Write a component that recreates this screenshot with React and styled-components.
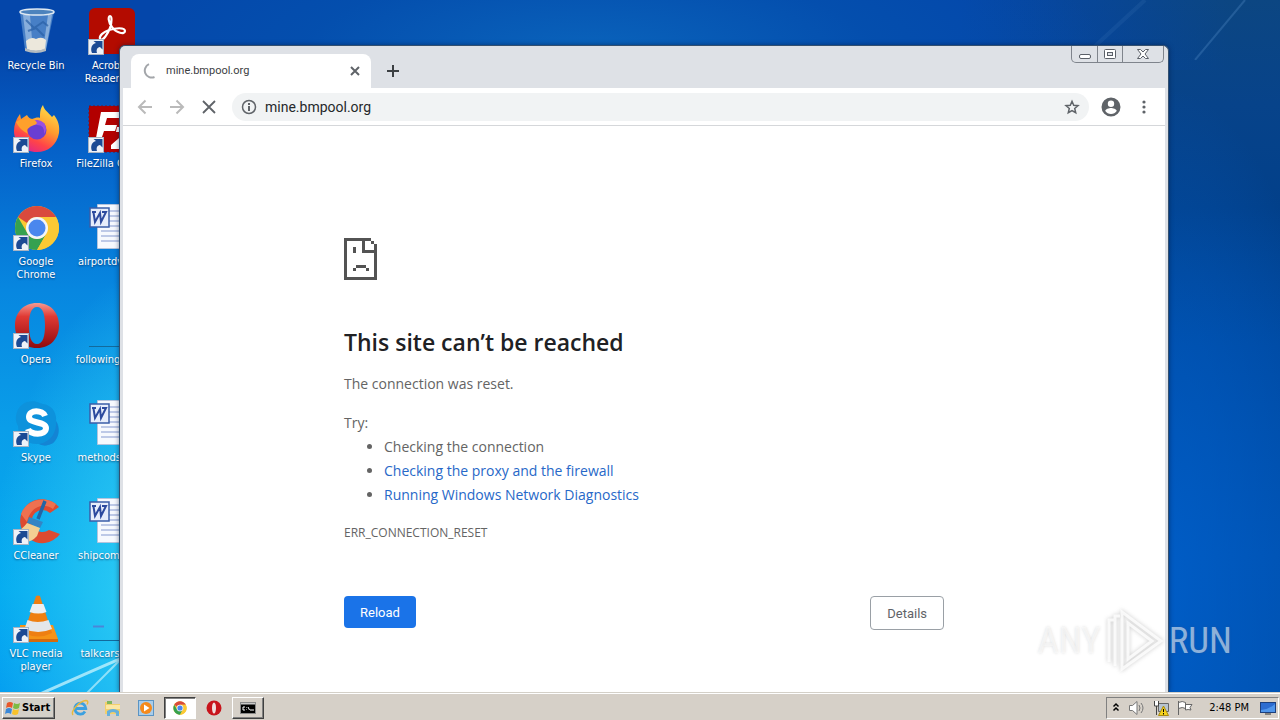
import React from 'react'
import styled, { createGlobalStyle } from 'styled-components'

const GlobalStyle = createGlobalStyle`
*{
  box-sizing: border-box;
}
body{
  margin: 0;
  overflow: hidden;
  font-family: "DejaVu Sans Condensed", "DejaVu Sans", sans-serif;
}
button{
  font-family: inherit;
  padding: 0;
  cursor: pointer;
}
svg{
  display: block;
}
`

const Screen = styled.div`
display: flex;
flex-direction: column;
height: 100vh;
`

const Desktop = styled.main`
flex: 1;
min-height: 0;
position: relative;
overflow: hidden;
background:
  radial-gradient(ellipse 200px 340px at 190px 86%, #5ae8f8 0, rgba(50,208,245,0.7) 40%, rgba(10,170,240,0) 100%) no-repeat 0 0 / 400px 100%,
  linear-gradient(to bottom, #0446aa 0, #0446aa 7%, #0560c8 21%, #0787e0 42%, #0a9ee9 62%, #04abf0 85%, #059ff0 100%) no-repeat 0 0 / 160px 100%,
  radial-gradient(ellipse 180px 500px at 91% 85%, rgba(0,96,204,0.8), rgba(0,80,176,0)) no-repeat 0 0 / 100% 100%,
  radial-gradient(ellipse 520px 160px at 46% 8%, #0a64bc 0, rgba(4,84,176,0.6) 55%, rgba(4,70,170,0) 100%) no-repeat 0 0 / 100% 100%,
  linear-gradient(to right, #0446aa 75%, rgba(4,70,170,0) 96%) no-repeat 0 0 / 100% 70px,
  linear-gradient(to bottom, #0c4682 0, #07438a 15%, #02408a 30%, #0049a0 50%, #0050ae 80%, #004fac 100%);
`

const Beams = styled.svg`
position: absolute;
left: ${props => props.$right ? 'auto' : '0'};
right: ${props => props.$right ? '0' : 'auto'};
bottom: ${props => props.$right ? 'auto' : '0'};
top: ${props => props.$right ? '0' : 'auto'};
`

const IconGrid = styled.ul`
position: relative;
list-style: none;
margin: 0;
padding: 0;
display: grid;
grid-template-rows: repeat(7, 98px);
grid-auto-flow: column;
grid-auto-columns: 72px;
column-gap: 3px;
`

const Shortcut = styled.li`
display: flex;
flex-direction: column;
align-items: center;
gap: 4px;
padding-top: 7px;
color: #fff;
font-size: 11px;
line-height: 13px;
text-align: center;
text-shadow: 0 1px 2px rgba(0,20,60,0.6);
white-space: pre;
`

const Window = styled.section`
position: absolute;
top: 45px;
left: 119px;
right: 111px;
bottom: 0;
display: flex;
flex-direction: column;
padding: 0 3px;
background: #dee1e6;
border: 1px solid #34506f;
border-bottom: none;
border-radius: 6px 6px 0 0;
box-shadow: 0 0 5px rgba(0,15,50,0.5);
`

const TabStrip = styled.header`
display: flex;
align-items: flex-end;
height: 42px;
padding-left: 8px;
`

const Tab = styled.div`
display: flex;
align-items: center;
gap: 8px;
width: 240px;
height: 34px;
padding: 0 8px 0 11px;
background: #fff;
border-radius: 8px 8px 0 0;
`

const TabTitle = styled.span`
flex: 1;
color: #3c4043;
font: 11px/16px Roboto, "Open Sans", sans-serif;
`

const IconButton = styled.button`
display: flex;
align-items: center;
justify-content: center;
width: ${props => props.$size || 16}px;
height: ${props => props.$size || 16}px;
border: none;
border-radius: 50%;
background: none;
color: ${props => props.$dim ? '#bababa' : '#5f6368'};
`

const NewTab = styled(IconButton)`
margin: 0 auto 3px 8px;
color: #3c4043;
`

const Controls = styled.div`
display: flex;
align-self: flex-start;
height: 17px;
margin-right: 1px;
border: 1px solid #7f848c;
border-top: none;
border-radius: 0 0 5px 5px;
`

const Control = styled.button`
display: flex;
align-items: center;
justify-content: center;
width: ${props => props.$wide ? '41px' : '25px'};
border: none;
border-left: ${props => props.$first ? 'none' : '1px solid #7f848c'};
background: none;
`

const Toolbar = styled.nav`
display: flex;
align-items: center;
gap: 8px;
height: 38px;
padding: 0 10px;
background: #fff;
border-bottom: 1px solid #d5d7da;
`

const Omnibox = styled.div`
flex: 1;
display: flex;
align-items: center;
gap: 8px;
height: 28px;
margin-left: 3px;
padding: 0 9px;
border-radius: 14px;
background: #f1f3f4;
color: #5f6368;
`

const Address = styled.input`
flex: 1;
min-width: 0;
padding: 0;
border: none;
outline: none;
background: none;
color: #26282b;
font: 14px/20px Roboto, "Open Sans", sans-serif;
`

const Page = styled.div`
flex: 1;
min-height: 0;
padding: 112px 24px 0;
overflow: hidden;
background: #fff;
color: #646464;
font: 14px/24px "Open Sans", "Noto Sans", sans-serif;
`

const ErrorBox = styled.div`
max-width: 600px;
margin: 0 auto;
`

const Heading = styled.h1`
margin: 48px 0 16px;
color: #202124;
font-size: 23px;
font-weight: 600;
line-height: 28px;
`

const Text = styled.p`
margin: 0 0 15px;
`

const Tips = styled.ul`
margin: -15px 0 0;
padding-left: 40px;
`

const Link = styled.a`
color: #2768c8;
text-decoration: none;
`

const ErrorCode = styled.div`
margin-top: 14px;
font-size: 12px;
`

const Actions = styled.div`
display: flex;
justify-content: space-between;
align-items: flex-start;
margin-top: 51px;
`

const Action = styled.button`
height: ${props => props.$primary ? '32px' : '34px'};
padding: 0 16px;
border: ${props => props.$primary ? 'none' : '1px solid #9aa0a6'};
border-radius: 4px;
background: ${props => props.$primary ? '#1a73e8' : '#fff'};
color: ${props => props.$primary ? '#fff' : '#5f6368'};
font-family: Roboto, "Open Sans", sans-serif;
font-size: 13px;
`

const Watermark = styled.div`
position: absolute;
right: 48px;
bottom: 18px;
display: flex;
align-items: center;
gap: 5px;
color: rgba(255,255,255,0.55);
font: 37px/66px "Liberation Sans Narrow", "Roboto Condensed", "Open Sans Condensed", "DejaVu Sans Condensed", sans-serif;
text-shadow: 0 0 3px rgba(90,90,90,0.2);
`

const WatermarkLogo = styled.svg`
filter: drop-shadow(0 0 2px rgba(90,90,90,0.4));
`

const Taskbar = styled.footer`
display: flex;
align-items: center;
height: 28px;
padding: 2px 1px 0 2px;
background: #d6d0c8;
border-top: 1px solid #d4d0c8;
box-shadow: inset 0 1px 0 #fff;
position: relative;
`

const StartButton = styled.button`
display: flex;
align-items: center;
gap: 1px;
height: 22px;
padding: 0 4px 0 2px;
border: 1px solid;
border-color: #fff #404040 #404040 #fff;
box-shadow: inset -1px -1px 0 #808080;
background: #d4d0c8;
color: #000;
font-size: 11px;
font-weight: bold;
`

const TaskButton = styled.button`
display: flex;
align-items: center;
justify-content: center;
width: ${props => props.$state ? '32px' : '24px'};
height: 22px;
border: 1px solid transparent;
border-color: ${props => props.$state === 'active' ? '#404040 #fff #fff #404040' : props.$state === 'open' ? '#fff #404040 #404040 #fff' : 'transparent'};
box-shadow: ${props => props.$state === 'active' ? 'inset 1px 1px 0 #808080' : props.$state === 'open' ? 'inset -1px -1px 0 #808080' : 'none'};
background: ${props => props.$state === 'active' ? '#fff' : 'transparent'};
`

const QuickLaunch = styled.div`
display: flex;
align-items: center;
gap: 9px;
margin-left: 13px;
`

const RunningApps = styled.div`
display: flex;
align-items: center;
gap: 6px;
margin-left: 6px;
`

const Tray = styled.div`
display: flex;
align-items: center;
gap: 8px;
height: 22px;
margin-left: auto;
padding: 0 2px 0 5px;
border: 1px solid;
border-color: #808080 #fff #fff #808080;
font-size: 11px;
color: #000;
`

const Clock = styled.time`
margin: 0 3px 0 8px;
`

const Arrow = () => (
    <g>
        <rect x='1.5' y='32.5' width='15' height='15' fill='#eef2f8' stroke='#a8b4c4' />
        <path d='M5 46c-2-5 0-9 4-10L6.500 34h9v8.500l-2.500-2.500c-3 .5-4 3-3 6z' fill='#1c4a94' />
    </g>
)

const Glyph = ({ children, shortcut = true }) => (
    <svg width='48' height='48' viewBox='0 0 48 48' aria-hidden='true'>
        {children}
        {shortcut && <Arrow />}
    </svg>
)

const RecycleBin = () => (
    <Glyph shortcut={false}>
        <path d='M8 5L13 43Q24 48 34 43L42 5Z' fill='#5e93cf' fillOpacity='.75' />
        <path d='M11 8l4 34 6 2-3-36zM36 8l-5 35 3-1 6-34z' fill='#c8def2' fillOpacity='.5' />
        <path d='M14 34q5-5 10-2 6-3 10 1l-1 9q-9 4-18 0z' fill='#ece8dc' />
        <path d='M14 13l8 8 9-6 5 4M16 24l8-3 8 8' stroke='#2a5fa5' strokeWidth='2' fill='none' opacity='.7' />
        <ellipse cx='25' cy='5' rx='17' ry='3' fill='#4d83bd' stroke='#dfe9f2' strokeWidth='1.500' />
        <path d='M13 41q11 5 21 0v3q-10 4-21 0z' fill='#b4bbc0' />
    </Glyph>
)

const Firefox = () => (
    <Glyph>
        <defs>
            <linearGradient id='fx' x1='.8' y1='0' x2='.3' y2='1'>
                <stop offset='0' stopColor='#ffe34a' />
                <stop offset='.45' stopColor='#ff9a2e' />
                <stop offset='.75' stopColor='#ff4448' />
                <stop offset='1' stopColor='#e0268a' />
            </linearGradient>
        </defs>
        <path d='M31 0c1 5 5 7 9 12l2-2c4 5 6 11 5 18-2 12-11 19-22 19C11 47 2 38 2 26c0-6 2-12 6-17l1 5 6-4c1 2 3 4 5 4 3-1 6-2 8-1 0-5 0-9 3-13z' fill='url(#fx)' />
        <circle cx='25' cy='25' r='9.500' fill='#6a3ed2' />
        <path d='M18 18q7-6 14 0 4 6 0 11 1-9-7-9z' fill='#9a4fe0' />
        <path d='M4 17c5-4 10-2 12-3 5-1 8 2 9 4-2 3-6 2-8 5-3 1-2 4-1 6-5-3-9-6-12-12z' fill='#ffa02c' />
    </Glyph>
)

const ChromeBall = () => (
    <>
        <circle cx='25' cy='25' r='22' fill='#fbc934' />
        <path d='M6 14A22 22 0 0 1 44 14H25A11 11 0 0 0 15 20z' fill='#d94a3d' />
        <path d='M6 14A22 22 0 0 0 25 47L34.500 30.500A11 11 0 0 1 15.500 30.500z' fill='#35a150' />
        <path d='M44 14A22 22 0 0 1 25 47L34.500 30.500A11 11 0 0 0 34 18L25 14z' fill='#fbc934' />
        <circle cx='25' cy='25' r='11' fill='#f3f5f8' />
        <circle cx='25' cy='25' r='8.500' fill='#4a87ee' />
    </>
)

const OperaRing = () => (
    <>
        <defs>
            <linearGradient id='op' x1='0' y1='0' x2='0' y2='1'>
                <stop offset='0' stopColor='#f39a92' />
                <stop offset='.3' stopColor='#e03a34' />
                <stop offset='1' stopColor='#8f0a0e' />
            </linearGradient>
        </defs>
        <path fillRule='evenodd' d='M25 2C39 2 47 12 47 24.500S39 47 25 47 3 37 3 24.500 11 2 25 2zM25 6c-6 0-8 8-8 18.500S19 43 25 43s8-8 8-18.500S31 6 25 6z' fill='url(#op)' />
    </>
)

const Skype = () => (
    <Glyph>
        <path d='M15 3C24 1 26 4 31 5c9 1 14 9 13 17 5 7 3 17-3 22-5 3-10 3-14 1C15 46 6 38 6 27 1 19 5 6 15 3z' fill='#0d92dc' />
        <path d='M44 22c4 8 3 16-3 22-5 3-10 3-14 1 12-2 18-12 17-23z' fill='#1484d4' />
        <path d='M33 17c-2-6-16-7-16 1 0 7 17 4 17 11 0 8-16 7-18 1' stroke='#fff' strokeWidth='6' fill='none' />
    </Glyph>
)

const CCleaner = () => (
    <Glyph>
        <path d='M47 10A22 22 0 1 0 48 37L37 33A11 11 0 1 1 38 16z' fill='#de4a30' />
        <path d='M44 7C32-2 14 3 9 17l6 8C18 11 30 4 41 12z' fill='#ee7150' />
        <path d='M33 4l-7 18' stroke='#2365a5' strokeWidth='3.500' />
        <path d='M17 20l14 5-3 6-13-5z' fill='#3584c4' />
        <path d='M15 26l13 5-3 8q-6 7-14 6-5-1-8-10 7-2 12-9z' fill='#f4cf92' />
    </Glyph>
)

const Vlc = () => (
    <Glyph>
        <path d='M8 30h33l5 14q0 3-3 3H8z' fill='#f59316' />
        <path d='M8 44h38v3H8z' fill='#d46b0c' />
        <path d='M24 1q2-1 4 0l12 37q-14 7-28 0z' fill='#ee7f12' />
        <path d='M20.500 9h11l3 8q-8 3-17 0z' fill='#eceff2' />
        <path d='M15.500 25q10 4 21 0l3.500 9q-14 6-27.500 0z' fill='#e4e7ea' />
    </Glyph>
)

const Acrobat = () => (
    <Glyph>
        <rect x='2' y='1' width='46' height='46' rx='6' fill='#b30b00' />
        <path d='M13 32c3 3 8-6 10-11 2-6 2-12 0-12s-2 6 2 11c4 6 13 8 13 4s-10-3-16-1-10 6-9 9z' fill='none' stroke='#fff' strokeWidth='2.200' />
    </Glyph>
)

const FileZilla = () => (
    <Glyph>
        <rect x='2' y='1' width='46' height='46' fill='#b20000' stroke='#7c1020' strokeDasharray='2 2' />
        <path d='M14 7h21l-1 6H20l-2 7h12l-2 6H17l-4 12H8zM30 22h18v5L33 39h13v5H24v-4l15-13H29z' fill='#fff' />
    </Glyph>
)

const WordDoc = () => (
    <Glyph shortcut={false}>
        <path d='M10.500 1.500h34v44h-34z' fill='#f6f9fe' stroke='#b3c4dd' />
        <path d='M22 8h20M22 13h20M22 18h20M22 23h20M14 28h28M14 33h28M14 38h28' stroke='#8499d0' strokeWidth='1.200' />
        <rect x='3' y='5' width='19' height='19' fill='#e6edfb' stroke='#3a5da8' strokeWidth='1.500' />
        <path d='M5 9h4M6.500 9.500L8 19l5-9 1 9 5-10h-4' stroke='#2c4a9e' strokeWidth='2' fill='none' />
    </Glyph>
)

const Thumb = ({ mark }) => (
    <Glyph shortcut={false}>
        <path d='M2 45.500h44' stroke='#126a9c' />
        {mark && <path d='M6 31.500h11' stroke='#4a86d8' strokeWidth='2' />}
    </Glyph>
)

const shortcuts = [
    ['Recycle Bin', <RecycleBin />],
    ['Firefox', <Firefox />],
    ['Google\nChrome', <Glyph><ChromeBall /></Glyph>],
    ['Opera', <Glyph><OperaRing /></Glyph>],
    ['Skype', <Skype />],
    ['CCleaner', <CCleaner />],
    ['VLC media\nplayer', <Vlc />],
    ['Acrobat\nReader DC', <Acrobat />],
    ['FileZilla Client', <FileZilla />],
    ['airportdvd.rtf', <WordDoc />],
    ['followingt.png', <Thumb />],
    ['methodsst.rtf', <WordDoc />],
    ['shipcomm.rtf', <WordDoc />],
    ['talkcars.png', <Thumb mark />],
]

const Line = ({ d, size = 16, width = 2 }) => (
    <svg width={size} height={size} viewBox='0 0 16 16' fill='none' stroke='currentColor' strokeWidth={width} aria-hidden='true'>
        <path d={d} />
    </svg>
)

const Browser = () => (
    <Window aria-label='Browser window'>
        <TabStrip>
            <Tab>
                <svg width='16' height='16' viewBox='0 0 16 16' aria-hidden='true'>
                    <path d='M7 1.200A6.800 6.800 0 1 0 12.500 14' fill='none' stroke='#a3a6aa' strokeWidth='2' />
                </svg>
                <TabTitle>mine.bmpool.org</TabTitle>
                <IconButton aria-label='Close tab'><Line d='M4 4l8 8M12 4l-8 8' /></IconButton>
            </Tab>
            <NewTab $size={28} aria-label='New tab'><Line d='M8 2v12M2 8h12' /></NewTab>
            <Controls>
                <Control $first aria-label='Minimize'>
                    <svg width='14' height='14' viewBox='0 0 14 14'><rect x='1.500' y='7.500' width='11' height='4' rx='1.500' fill='#fff' stroke='#5b6068' /></svg>
                </Control>
                <Control aria-label='Maximize'>
                    <svg width='14' height='14' viewBox='0 0 14 14'><rect x='1.500' y='2.500' width='11' height='9' rx='1' fill='#fff' stroke='#5b6068' /><rect x='4.500' y='5.500' width='5' height='3' fill='#dee1e6' stroke='#5b6068' /></svg>
                </Control>
                <Control $wide aria-label='Close'>
                    <svg width='14' height='14' viewBox='0 0 14 14'><path d='M1.500 2.500h3L7 5l2.500-2.500h3L9 7l3.500 4.500h-3L7 9l-2.500 2.500h-3L5 7z' fill='#fff' stroke='#5b6068' /></svg>
                </Control>
            </Controls>
        </TabStrip>
        <Toolbar>
            <IconButton $size={24} $dim aria-label='Back'><Line d='M15 8H2M8.500 1.500L2 8l6.500 6.500' /></IconButton>
            <IconButton $size={24} $dim aria-label='Forward'><Line d='M1 8h13M7.500 1.500L14 8l-6.500 6.500' /></IconButton>
            <IconButton $size={24} aria-label='Stop'><Line d='M2 2l12 12M14 2L2 14' width={1.8} /></IconButton>
            <Omnibox>
                <svg width='16' height='16' viewBox='0 0 16 16' aria-hidden='true'>
                    <circle cx='8' cy='8' r='6.500' fill='none' stroke='currentColor' strokeWidth='1.500' />
                    <path d='M8 7v5M8 4v2' stroke='currentColor' strokeWidth='2' />
                </svg>
                <Address aria-label='Address' defaultValue='mine.bmpool.org' />
                <IconButton aria-label='Bookmark'>
                    <Line width={1.5} d='M8 2.300l1.700 4 4.300.4-3.300 2.800 1 4.200L8 11.500l-3.700 2.200 1-4.200L2 6.700l4.300-.4z' />
                </IconButton>
            </Omnibox>
            <IconButton $size={28} aria-label='Profile'>
                <svg width='20' height='20' viewBox='0 0 20 20'>
                    <path fillRule='evenodd' fill='currentColor' d='M10 .5a9.500 9.500 0 1 0 0 19 9.500 9.500 0 0 0 0-19zM10 3.500a3.200 3.200 0 1 1 0 6.400 3.200 3.200 0 0 1 0-6.400zM10 17a6.800 6.800 0 0 1-5.700-3c0-1.900 3.800-3 5.700-3s5.700 1.100 5.700 3A6.800 6.800 0 0 1 10 17z' />
                </svg>
            </IconButton>
            <IconButton $size={22} aria-label='Menu'>
                <svg width='16' height='16' viewBox='0 0 16 16' fill='currentColor'><circle cx='8' cy='3' r='1.600' /><circle cx='8' cy='8' r='1.600' /><circle cx='8' cy='13' r='1.600' /></svg>
            </IconButton>
        </Toolbar>
        <Page>
            <ErrorBox>
                <svg width='33' height='42' viewBox='0 0 33 42' fill='#535353' shapeRendering='crispEdges' aria-hidden='true'>
                    <path d='M0 0h27v3H3v36h27V6h3v36H0zM18 3h3v9h9v3H18zM27 3h3v3h-3zM9 9h3v6H9zM12 27h10v3H12zM9 30h3v3H9zM22 30h3v3h-3z' />
                </svg>
                <Heading>This site can’t be reached</Heading>
                <Text>The connection was reset.</Text>
                <Text>Try:</Text>
                <Tips>
                    <li>Checking the connection</li>
                    <li><Link href='#proxy'>Checking the proxy and the firewall</Link></li>
                    <li><Link href='#diagnostics'>Running Windows Network Diagnostics</Link></li>
                </Tips>
                <ErrorCode>ERR_CONNECTION_RESET</ErrorCode>
                <Actions>
                    <Action $primary>Reload</Action>
                    <Action>Details</Action>
                </Actions>
            </ErrorBox>
        </Page>
    </Window>
)

const App = () => {
    return (
        <Screen>
            <GlobalStyle />
            <Desktop>
                <Beams width='120' height='80' viewBox='0 0 120 80' aria-hidden='true'>
                    <path d='M40 82Q85 62 122 46' stroke='#c9f4fd' strokeWidth='3' fill='none' opacity='.75' />
                    <path d='M86 82Q104 64 122 46' stroke='#bdf0fb' strokeWidth='2' fill='none' opacity='.7' />
                </Beams>
                <Beams $right width='200' height='60' viewBox='0 0 200 60' aria-hidden='true'>
                    <path d='M165 0L115 60' stroke='#5b93cc' strokeWidth='2' opacity='.3' />
                    <path d='M65 0L0 60' stroke='#5b93cc' strokeWidth='4' opacity='.12' />
                </Beams>
                <IconGrid>
                    {shortcuts.map(([name, icon]) => (
                        <Shortcut key={name}>
                            {icon}
                            <span>{name}</span>
                        </Shortcut>
                    ))}
                </IconGrid>
                <Browser />
                <Watermark>
                    <span>ANY</span>
                    <WatermarkLogo width='58' height='66' viewBox='0 0 58 66' fill='none' stroke='rgba(255,255,255,.8)' strokeWidth='3' aria-hidden='true'>
                        <path d='M3 54V12h5M9 58V8h5' />
                        <path d='M16 4v57L55 33zM22 15v36L46 33z' />
                    </WatermarkLogo>
                    <span>RUN</span>
                </Watermark>
            </Desktop>
            <Taskbar>
                <StartButton>
                    <svg width='16' height='16' viewBox='0 0 16 16' aria-hidden='true'>
                        <path d='M2 3q3-2 6 0L7 8Q4 6 1 8z' fill='#e8582a' />
                        <path d='M9 3q3 2 6 0l-1 5q-3 2-6 0z' fill='#7dbb42' />
                        <path d='M1 9q3-2 6 0l-1 5q-3-2-6 0z' fill='#3a88d8' />
                        <path d='M8 9q3 2 6 0l-1 5q-3 2-6 0z' fill='#f8c22c' />
                    </svg>
                    Start
                </StartButton>
                <QuickLaunch>
                    <TaskButton aria-label='Internet Explorer'>
                        <svg width='18' height='18' viewBox='0 0 18 18' fill='none'>
                            <path d='M14 12.500A5.500 5.500 0 1 1 14.800 9.500H5' stroke='#3ba0e0' strokeWidth='2.800' />
                            <path d='M2 16C-1 12 9 2 15 1.500q3 .5 1 4' stroke='#e8b93c' strokeWidth='1.400' />
                        </svg>
                    </TaskButton>
                    <TaskButton aria-label='Explorer'>
                        <svg width='18' height='18' viewBox='0 0 18 18'>
                            <path d='M1 3h6l1 2h8v10H1z' fill='#f2cf6c' />
                            <path d='M3 2h5v3H3z' fill='#7fb65c' />
                            <path d='M2 6h14v4H2z' fill='#fbe7a4' />
                            <path d='M3 17v-5q6-4 12 0v5h-3v-3q-3-2-6 0v3z' fill='#66b0dc' />
                        </svg>
                    </TaskButton>
                    <TaskButton aria-label='Media Player'>
                        <svg width='18' height='18' viewBox='0 0 18 18'>
                            <rect x='1.500' y='1.500' width='15' height='15' fill='#a9cdea' stroke='#5a94c4' />
                            <circle cx='9' cy='9' r='6' fill='#f58a1c' />
                            <path d='M7 5.500l5.500 3.500L7 12.500z' fill='#fff' />
                        </svg>
                    </TaskButton>
                </QuickLaunch>
                <RunningApps>
                    <TaskButton $state='active' aria-label='Chrome'>
                        <svg width='14' height='14' viewBox='2 2 46 46'><ChromeBall /></svg>
                    </TaskButton>
                    <TaskButton aria-label='Opera'>
                        <svg width='16' height='16' viewBox='0 0 16 16'><ellipse cx='8' cy='8' rx='7.500' ry='7.500' fill='#c8141c' /><ellipse cx='8' cy='8' rx='2' ry='5.500' fill='#f0dede' /></svg>
                    </TaskButton>
                    <TaskButton $state='open' aria-label='Command prompt'>
                        <svg width='16' height='16' viewBox='0 0 16 16'>
                            <rect x='.5' y='2.500' width='15' height='11' fill='#000' stroke='#8a8a8a' />
                            <path d='M1 3h14v1.500H1z' fill='#c8c8c8' />
                            <path d='M5 7H3v3h2M6.500 7.500v.5M6.500 9.500v.5M8 7l1.500 3M10 10h4' stroke='#fff' fill='none' />
                        </svg>
                    </TaskButton>
                </RunningApps>
                <Tray>
                    <svg width='8' height='16' viewBox='0 0 8 16' fill='none' stroke='#000' strokeWidth='1.500' aria-hidden='true'><path d='M1.500 6.500L4 4l2.500 2.500M1.500 10.500L4 8l2.500 2.500' /></svg>
                    <svg width='17' height='16' viewBox='0 0 17 16' fill='#fff' stroke='#777' aria-hidden='true'><path d='M1.500 5.500h3L9 1.500v13l-4.500-4h-3z' /><path d='M11 5q2 3 0 6M13 3q4 5 0 10' fill='none' /></svg>
                    <svg width='16' height='16' viewBox='0 0 16 16' aria-hidden='true'>
                        <path d='M5.500 3.500h10v8h-10z' fill='#b8c4d0' stroke='#666' />
                        <path d='M1.500 1v5h4V1M3.500 6v9' stroke='#444' fill='#fff' />
                        <path d='M10.500 6l5 9.500h-10z' fill='#f6d21c' stroke='#a88a10' />
                        <path d='M10.500 9v3M10.500 13v1.500' stroke='#000' />
                    </svg>
                    <svg width='16' height='16' viewBox='0 0 16 16' fill='#fff' stroke='#666' aria-hidden='true'><path d='M1.500 1v14M1.500 2.500q4-2 7 0v6q-3-2-7 0zM8.500 4.500h6.500l-2 3 1 2.500q-3-1-5.500 0z' /></svg>
                    <Clock>2:48 PM</Clock>
                    <svg width='16' height='14' viewBox='0 0 16 14' aria-hidden='true'><rect x='.5' y='1.500' width='15' height='10' fill='#2c6cd0' stroke='#1c3f7c' /><path d='M1 9q7 0 14-6v8H1z' fill='#4f95ea' /><path d='M5 13h6' stroke='#333' /></svg>
                </Tray>
            </Taskbar>
        </Screen>
    )
}

export default App
